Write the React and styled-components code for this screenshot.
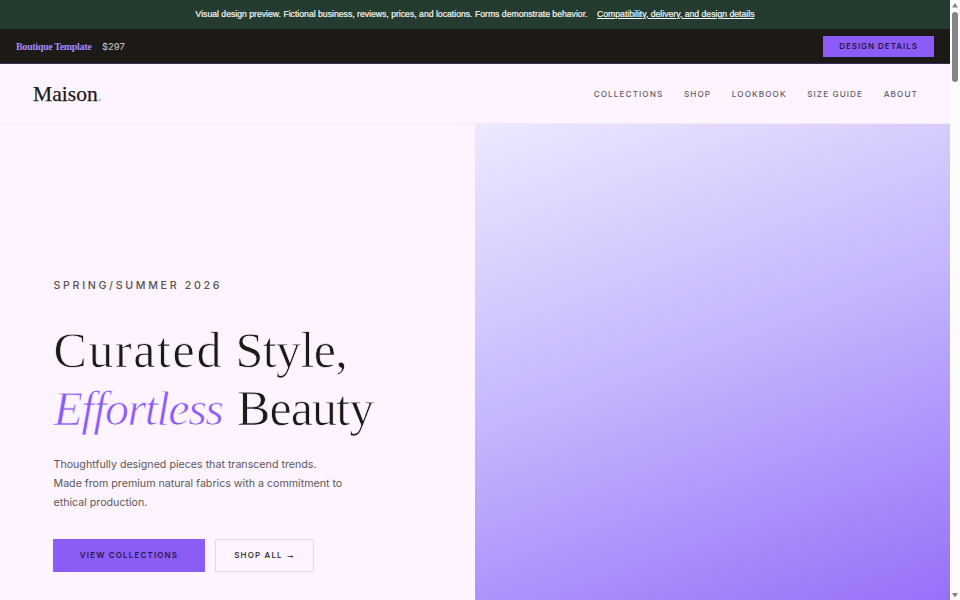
import React from 'react';
import styled, { createGlobalStyle } from 'styled-components';

const GlobalStyle = createGlobalStyle`
    * {
        box-sizing: border-box;
    }
    body {
        margin: 0;
        overflow: hidden;
        background: #fdf4ff;
        font-family: Inter, 'Liberation Sans', sans-serif;
    }
    a {
        color: inherit;
        text-decoration: none;
    }
`;

const Window = styled.div`
    display: grid;
    grid-template-columns: 950px 10px;
    height: 600px;
    overflow: hidden;
`;

const Page = styled.div`
    display: flex;
    flex-direction: column;
    min-width: 0;
    height: 600px;
`;

const Notice = styled.div`
    display: flex;
    justify-content: center;
    align-items: center;
    gap: 9.5px;
    height: 29px;
    flex: none;
    padding-bottom: 2px;
    background: #243c2f;
    color: #f4f7f5;
    font-family: 'Liberation Sans', Arial, sans-serif;
    font-size: 8.67px;
    -webkit-text-stroke: 0.2px #f4f7f5;
    white-space: nowrap;
`;

const NoticeLink = styled.a`
    text-decoration: underline;
`;

const TemplateBar = styled.div`
    display: flex;
    align-items: center;
    height: 35px;
    flex: none;
    padding: 0 16px;
    background: #1c1917;
    border-bottom: 1px solid #3b2d59;
`;

const TemplateName = styled.span`
    width: 86px;
    font-family: 'Liberation Serif', serif;
    font-size: 10px;
    font-weight: 700;
    letter-spacing: -0.33px;
    color: #a78bfa;
    white-space: nowrap;
`;

const Price = styled.span`
    flex: 1;
    font-size: 9.33px;
    font-weight: 500;
    color: #bdb8b4;
`;

const DetailsButton = styled.a`
    display: grid;
    place-items: center;
    width: 111px;
    height: 21px;
    background: #8b5cf6;
    color: #281848;
    font-size: 8px;
    font-weight: 600;
    letter-spacing: 0.97px;
`;

const Header = styled.header`
    display: flex;
    justify-content: space-between;
    align-items: center;
    height: 60px;
    flex: none;
    padding: 0 32px 0 33px;
    border-bottom: 1px solid #f3e8f5;
`;

const Logo = styled.a`
    padding-top: 1px;
    font-family: 'Liberation Serif', serif;
    font-size: 21.5px;
    letter-spacing: 0.05px;
    color: #1c1917;
    -webkit-text-stroke: 0.25px #1c1917;

    span {
        color: #a99bb8;
        font-size: 17px;
        -webkit-text-stroke: 0;
    }
`;

const Nav = styled.nav`
    display: flex;
    gap: 20.6px;
    font-size: 8.2px;
    font-weight: 500;
    letter-spacing: 1.08px;
    color: #645f62;
    padding-top: 1px;
`;

const Hero = styled.main`
    display: grid;
    grid-template-columns: 1fr 1fr;
    flex: 1;
`;

const HeroContent = styled.section`
    padding: 155px 53px 0;
`;

const Season = styled.p`
    margin: 0;
    padding-left: 0.5px;
    font-size: 10.67px;
    font-weight: 500;
    line-height: 14px;
    letter-spacing: 2.67px;
    color: #57534e;
`;

const Title = styled.h1`
    margin: 28px 0 0;
    padding-left: 0.5px;
    font-family: 'Liberation Serif', serif;
    font-size: 50px;
    font-weight: 400;
    line-height: 58px;
    color: #1c1917;
    -webkit-text-stroke: 0.75px #fdf4ff;
    white-space: nowrap;
`;

const TitleWord = styled.span`
    letter-spacing: ${({ $spacing }) => $spacing}px;
`;

const Accent = styled.em`
    font-size: 48px;
    color: #8b5cf6;
    letter-spacing: -1.5px;
    margin-right: 2px;
`;

const Lead = styled.p`
    margin: 16.5px 0 0;
    width: 300px;
    padding-left: 0.5px;
    font-size: 10.67px;
    line-height: 19.3px;
    color: #5c5758;
`;

const Actions = styled.div`
    display: flex;
    gap: 10px;
    margin-top: 26.6px;
`;

const Button = styled.a`
    display: flex;
    justify-content: center;
    align-items: center;
    gap: 3px;
    width: ${({ $primary }) => ($primary ? 152 : 99)}px;
    height: 33px;
    padding-bottom: ${({ $primary }) => ($primary ? 1 : 0)}px;
    border: ${({ $primary }) => ($primary ? 'none' : '1px solid #e6d8ec')};
    background: ${({ $primary }) => ($primary ? '#8b5cf6' : 'transparent')};
    color: ${({ $primary }) => ($primary ? '#281848' : '#1c1917')};
    font-size: 8px;
    font-weight: ${({ $primary }) => ($primary ? 600 : 500)};
    letter-spacing: 1.16px;
`;

const ButtonArrow = styled.span`
    font-family: 'Liberation Sans', sans-serif;
    font-size: 9px;
    line-height: 10px;
    letter-spacing: 0;
    -webkit-text-stroke: 0.2px #1c1917;
`;

const HeroVisual = styled.section`
    background: linear-gradient(
        160deg,
        #ede9fe 0%,
        #c4b5fd 48%,
        #9770f9 100%
    );
`;

const Scrollbar = styled.div`
    display: flex;
    flex-direction: column;
    align-items: center;
    padding: 3px 0 2px;
    background: #fcfcfc;
`;

const Arrow = styled.svg`
    width: 6px;
    height: 5px;
    fill: #858585;
`;

const Thumb = styled.div`
    width: 6px;
    height: 70px;
    margin: 4px 0 auto;
    border-radius: 3px;
    background: #858585;
`;

const links = ['Collections', 'Shop', 'Lookbook', 'Size Guide', 'About'];

const App = () => {
    return (
        <>
            <GlobalStyle />
            <Window>
                <Page>
                    <Notice>
                        <span>
                            Visual design preview. Fictional business, reviews,
                            prices, and locations. Forms demonstrate behavior.
                        </span>
                        <NoticeLink href="#details">
                            Compatibility, delivery, and design details
                        </NoticeLink>
                    </Notice>

                    <TemplateBar>
                        <TemplateName>Boutique Template</TemplateName>
                        <Price>$297</Price>
                        <DetailsButton href="#details">
                            DESIGN DETAILS
                        </DetailsButton>
                    </TemplateBar>

                    <Header>
                        <Logo href="#home">
                            Maison<span>.</span>
                        </Logo>
                        <Nav>
                            {links.map((link) => (
                                <a key={link} href="#nav">
                                    {link.toUpperCase()}
                                </a>
                            ))}
                        </Nav>
                    </Header>

                    <Hero>
                        <HeroContent>
                            <Season>SPRING/SUMMER 2026</Season>
                            <Title>
                                <TitleWord $spacing={1.6}>Curated</TitleWord>{' '}
                                <TitleWord $spacing={-0.6}>Style,</TitleWord>
                                <br />
                                <Accent>Effortless</Accent>{' '}
                                <TitleWord $spacing={-0.9}>Beauty</TitleWord>
                            </Title>
                            <Lead>
                                Thoughtfully designed pieces that transcend
                                trends.
                                <br />
                                Made from premium natural fabrics with a
                                commitment to ethical production.
                            </Lead>
                            <Actions>
                                <Button $primary href="#collections">
                                    VIEW COLLECTIONS
                                </Button>
                                <Button href="#shop">
                                    SHOP ALL <ButtonArrow>→</ButtonArrow>
                                </Button>
                            </Actions>
                        </HeroContent>
                        <HeroVisual />
                    </Hero>
                </Page>

                <Scrollbar>
                    <Arrow viewBox="0 0 6 5">
                        <path d="M3 0 6 4.5H0Z" />
                    </Arrow>
                    <Thumb />
                    <Arrow viewBox="0 0 6 5">
                        <path d="M0 0H6L3 4.5Z" />
                    </Arrow>
                </Scrollbar>
            </Window>
        </>
    );
};

export default App;
